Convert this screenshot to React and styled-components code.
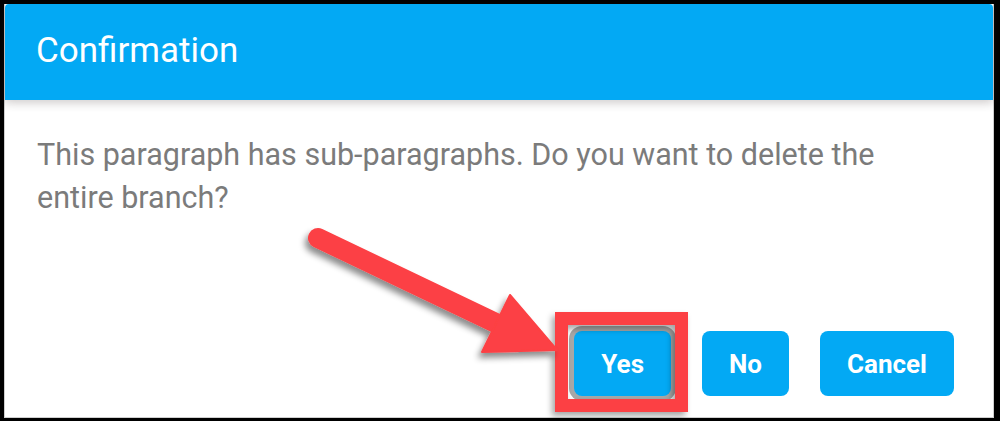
import React from "react";
import styled, { createGlobalStyle } from "styled-components";

const Global = createGlobalStyle`
  html, body { margin: 0; padding: 0; background: #ffffff; }
  body { font-family: Roboto, "Noto Sans", Arial, sans-serif; }
`;

const Frame = styled.div`
  position: relative;
  box-sizing: border-box;
  width: 1000px;
  height: 421px;
  border-style: solid;
  border-color: #000;
  border-width: 4px 6px 3px 4px;
  background: #fff;
`;

const Dialog = styled.div`
  box-sizing: border-box;
  height: 100%;
  display: flex;
  flex-direction: column;
  border: 1px solid #cfcfcf;
  border-top: none;
  background: #fff;
`;

const Header = styled.div`
  position: relative;
  z-index: 1;
  height: 96px;
  box-sizing: border-box;
  display: flex;
  align-items: center;
  padding: 0 0 4px 31px;
  background: #03a9f4;
  border-radius: 4px 4px 0 0;
  box-shadow: 0 3px 10px rgba(60, 40, 40, 0.24);
`;

const Title = styled.h2`
  margin: 0;
  font-family: Roboto, sans-serif;
  font-weight: 400;
  font-size: 35px;
  color: #ffffff;
`;

const Body = styled.p`
  margin: 0;
  padding: 33px 50px 0 32px;
  font-family: Roboto, sans-serif;
  font-size: 30.5px;
  line-height: 43px;
  color: #7b7b7b;
`;

const Footer = styled.div`
  margin-top: auto;
  display: flex;
  justify-content: flex-end;
  gap: 31px;
  padding: 0 39px 21px 0;
`;

const Button = styled.button`
  height: 65px;
  padding: 0 ${(p) => p.$pad}px;
  border: none;
  border-radius: 8px;
  background: #03a9f4;
  color: #fff;
  font-family: Roboto, sans-serif;
  font-weight: 700;
  font-size: 26px;
  cursor: pointer;
  box-shadow: ${(p) => (p.$focused ? "0 0 0 5px #a7a7a7" : "none")};
`;

const Highlight = styled.div`
  position: absolute;
  left: 551px;
  top: 308px;
  width: 133px;
  height: 100px;
  box-sizing: border-box;
  border: 13px solid #fc4044;
  filter: drop-shadow(-3px 4px 3px rgba(0, 0, 0, 0.35));
  pointer-events: none;
`;

const ArrowLayer = styled.svg`
  position: absolute;
  left: -4px;
  top: -4px;
  width: 1000px;
  height: 421px;
  pointer-events: none;
  overflow: visible;
`;

export default function App() {
  return (
    <>
      <Global />
      <Frame>
        <Dialog>
          <Header>
            <Title>Confirmation</Title>
          </Header>
          <Body>
            This paragraph has sub-paragraphs. Do you want to delete the entire
            branch?
          </Body>
          <Footer>
            <Button $pad={27} $focused>
              Yes
            </Button>
            <Button $pad={27}>No</Button>
            <Button $pad={27}>Cancel</Button>
          </Footer>
        </Dialog>
        <Highlight />
        <ArrowLayer viewBox="0 0 1000 421">
          <defs>
            <filter id="sh" x="-20%" y="-20%" width="140%" height="140%">
              <feDropShadow dx="-3" dy="5" stdDeviation="3" floodColor="#000" floodOpacity="0.45" />
            </filter>
          </defs>
          <g filter="url(#sh)" fill="#fc4044" stroke="#fc4044">
            <line x1="318" y1="238" x2="500" y2="325" strokeWidth="20" strokeLinecap="round" />
            <polygon points="510,295 557,350 482,352" strokeWidth="2" strokeLinejoin="round" />
          </g>
        </ArrowLayer>
      </Frame>
    </>
  );
}
